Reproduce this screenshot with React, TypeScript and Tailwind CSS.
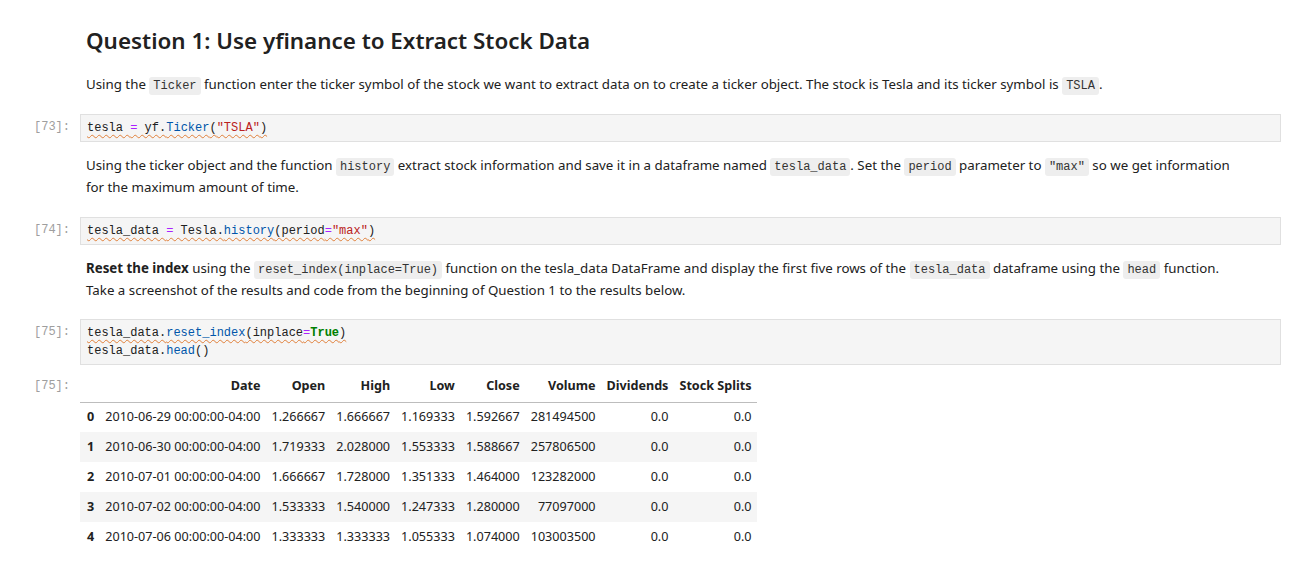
const sans = { fontFamily: '"Noto Sans", "Open Sans", sans-serif' };

function C({ children }: { children: React.ReactNode }) {
  return (
    <code className="rounded-[3px] bg-[#eeeeee] px-[4px] py-[2px] font-['Liberation_Mono',monospace] text-[12px] leading-[1] text-[#333]">
      {children}
    </code>
  );
}

function Prompt({ n }: { n: string }) {
  return (
    <div className="w-[80px] shrink-0 pr-[10px] text-right font-['Liberation_Mono',monospace] text-[12px] leading-[17px] text-[#9e9e9e]">
      [{n}]:
    </div>
  );
}

const sq = "underline decoration-wavy decoration-[#e0803a] decoration-1 underline-offset-[3px]";

function CodeCell({ n, children }: { n: string; children: React.ReactNode }) {
  return (
    <div className="flex items-start">
      <div className="pt-[5px]">
        <Prompt n={n} />
      </div>
      <div className="mr-[15px] flex-1 border border-[#e0e0e0] bg-[#f5f5f5] px-[6px] py-[4px] font-['Liberation_Mono',monospace] text-[12px] leading-[18px] text-[#212121]">
        {children}
      </div>
    </div>
  );
}

function Md({ children, className = "" }: { children: React.ReactNode; className?: string }) {
  return (
    <div className="flex">
      <div className="w-[80px] shrink-0" />
      <div className={"mr-[15px] flex-1 pr-[42px] pl-[6px] text-[13.3px] leading-[22px] text-[#212121] " + className}>
        {children}
      </div>
    </div>
  );
}

const rows = [
  ["0", "2010-06-29 00:00:00-04:00", "1.266667", "1.666667", "1.169333", "1.592667", "281494500", "0.0", "0.0"],
  ["1", "2010-06-30 00:00:00-04:00", "1.719333", "2.028000", "1.553333", "1.588667", "257806500", "0.0", "0.0"],
  ["2", "2010-07-01 00:00:00-04:00", "1.666667", "1.728000", "1.351333", "1.464000", "123282000", "0.0", "0.0"],
  ["3", "2010-07-02 00:00:00-04:00", "1.533333", "1.540000", "1.247333", "1.280000", "77097000", "0.0", "0.0"],
  ["4", "2010-07-06 00:00:00-04:00", "1.333333", "1.333333", "1.055333", "1.074000", "103003500", "0.0", "0.0"],
];

const heads = ["", "Date", "Open", "High", "Low", "Close", "Volume", "Dividends", "Stock Splits"];

export default function App() {
  return (
    <div className="min-h-[580px] w-[1296px] bg-white pt-[25px]" style={sans}>
      <Md>
        <h1 className="text-[22.4px] font-semibold leading-[32px] text-[#212121]">
          Question 1: Use yfinance to Extract Stock Data
        </h1>
      </Md>
      <div className="h-[16px]" />
      <Md>
        Using the <C>Ticker</C> function enter the ticker symbol of the stock we want to extract data on to create a
        ticker object. The stock is Tesla and its ticker symbol is <C>TSLA</C>.
      </Md>
      <div className="h-[19px]" />
      <CodeCell n="73">
        <span className={sq}>
          tesla <span className="text-[#aa22ff]">=</span> yf.<span className="text-[#0055aa]">Ticker</span>(
          <span className="text-[#ba2121]">"TSLA"</span>)
        </span>
      </CodeCell>
      <div className="h-[12px]" />
      <Md>
        Using the ticker object and the function <C>history</C> extract stock information and save it in a dataframe
        named <C>tesla_data</C>. Set the <C>period</C> parameter to <C>"max"</C> so we get information for the maximum
        amount of time.
      </Md>
      <div className="h-[19px]" />
      <CodeCell n="74">
        <span className={sq}>
          tesla_data <span className="text-[#aa22ff]">=</span> Tesla.<span className="text-[#0055aa]">history</span>
          (period<span className="text-[#aa22ff]">=</span>
          <span className="text-[#ba2121]">"max"</span>)
        </span>
      </CodeCell>
      <div className="h-[12px]" />
      <Md>
        <b className="font-bold">Reset the index</b> using the <C>reset_index(inplace=True)</C> function on the
        tesla_data DataFrame and display the first five rows of the <C>tesla_data</C> dataframe using the <C>head</C>{" "}
        function. Take a screenshot of the results and code from the beginning of Question 1 to the results below.
      </Md>
      <div className="h-[18px]" />
      <CodeCell n="75">
        <div>
          <span className={sq}>
            tesla_data.<span className="text-[#0055aa]">reset_index</span>(inplace
            <span className="text-[#aa22ff]">=</span>
            <span className="font-bold text-[#008000]">True</span>)
          </span>
        </div>
        <div>
          tesla_data.<span className="text-[#0055aa]">head</span>()
        </div>
      </CodeCell>
      <div className="mt-[7px] flex items-start">
        <div className="pt-[6px]">
          <Prompt n="75" />
        </div>
        <table className="border-collapse text-[12.6px] text-[#212121]">
          <thead>
            <tr className="border-b border-[#bdbdbd]">
              {heads.map((h, i) => (
                <th key={i} className="h-[30px] px-[5.5px] text-right font-bold whitespace-nowrap">
                  {h}
                </th>
              ))}
            </tr>
          </thead>
          <tbody>
            {rows.map((r, ri) => (
              <tr key={ri} className={ri % 2 === 1 ? "bg-[#f5f5f5]" : ""}>
                {r.map((c, ci) => (
                  <td
                    key={ci}
                    className={
                      "h-[30px] px-[5.5px] whitespace-nowrap " +
                      (ci === 0 ? "pl-[7px] text-left font-bold" : "text-right")
                    }
                  >
                    {c}
                  </td>
                ))}
              </tr>
            ))}
          </tbody>
        </table>
      </div>
    </div>
  );
}
